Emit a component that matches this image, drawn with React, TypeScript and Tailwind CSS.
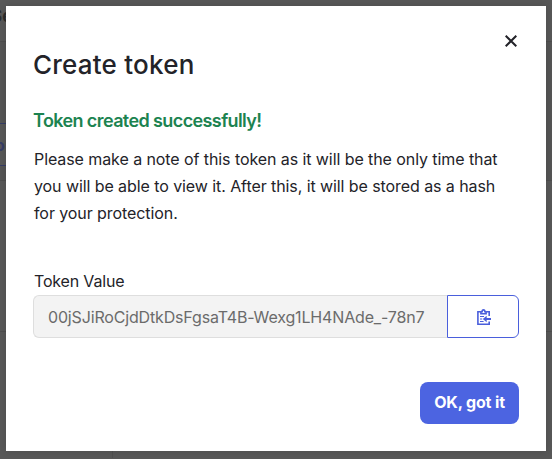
import { useState } from "react";

const TOKEN = "00jSJiRoCjdDtkDsFgsaT4B-Wexg1LH4NAde_-78n7";

function CloseIcon() {
  return (
    <svg width="12" height="12" viewBox="0 0 12 12" fill="none" stroke="#232329" strokeWidth="2">
      <path d="M0.7 0.7 11.3 11.3M11.3 0.7 0.7 11.3" />
    </svg>
  );
}

function ClipboardIcon() {
  return (
    <svg width="14" height="16" viewBox="0 0 14 16" fill="none" stroke="#4a5fdc" strokeWidth="1.6">
      <path d="M3.5 2.8H0.9V15.2H12.2V12.4M9.5 2.8H12.2V7" />
      <path d="M3.9 4.7V2.7H5.1C5.1 0.2 7.9 0.2 7.9 2.7H9.1V4.7Z" />
      <path d="M3 7.5H7M3 10H5.2M3 12.5H6.6" strokeWidth="1.2" />
      <path d="M14 10H7.5" strokeWidth="2" />
      <path d="M5.8 10 9.7 6.8V13.2Z" fill="#4a5fdc" stroke="none" />
    </svg>
  );
}

function PageBehind() {
  return (
    <div className="h-[459px] w-full overflow-hidden bg-[#585858]">
      <div className="h-[42px] border-b border-[#4e4e4e] pt-1">
        <span className="-ml-[9px] text-[17px] font-bold leading-6 text-[#2b2b2b]">Se</span>
      </div>
      <div className="flex h-[139px] items-end border-b border-[#4e4e4e] bg-[#555555] pb-[14px]">
        <div className="flex h-[43px] w-10 items-center border-y border-[#363d66] bg-[#585858]">
          <span className="-ml-[5px] text-base font-bold text-[#363d66]">o</span>
        </div>
      </div>
      <div className="h-[151px] border-b border-[#4e4e4e]" />
      <div className="ml-[112px] h-[126px] border-l border-[#505050]" />
    </div>
  );
}

function TokenField({ value }: { value: string }) {
  const [copied, setCopied] = useState(false);

  const copy = () => {
    navigator.clipboard?.writeText(value);
    setCopied(true);
  };

  return (
    <div className="mt-[41px]">
      <p className="text-base leading-[27px] tracking-[-0.17px]">Token Value</p>
      <div className="-ml-px flex h-[43px] w-[486px]">
        <div className="flex w-[414px] items-center rounded-l-md border border-r-0 border-[#dedede] bg-[#f3f3f3] pl-[14px] text-base tracking-[-0.16px] text-[#6b6b6b]">
          <span className="whitespace-nowrap">{value}</span>
        </div>
        <button
          type="button"
          aria-label={copied ? "Copied" : "Copy token"}
          onClick={copy}
          className="flex w-[72px] items-center justify-center rounded-r-md border border-[#4a5fdc] bg-white pl-[2px]"
        >
          <ClipboardIcon />
        </button>
      </div>
    </div>
  );
}

export default function App() {
  return (
    <div className="relative h-[459px] w-full overflow-hidden font-['Inter','Liberation_Sans',sans-serif] text-[#232329]">
      <PageBehind />

      <div className="absolute inset-0 px-[6px] pt-[6px] pb-[8px]">
        <div role="dialog" className="flex h-full flex-col bg-white pr-[27px] pl-7 shadow-[0_0_8px_rgba(0,0,0,0.15)]">
          <div className="flex h-[81px] justify-between">
            <h1 className="-ml-px pt-[42px] text-[26px] font-medium leading-[34px] tracking-[0.22px]">Create token</h1>
            <button type="button" aria-label="Close" className="mt-[29px] mr-[2px] h-3">
              <CloseIcon />
            </button>
          </div>

          <h2 className="-ml-px mt-[20px] text-lg font-semibold leading-[27px] tracking-[-0.6px] text-[#1c8350]">
            Token created successfully!
          </h2>
          <p className="mt-3 text-base leading-[27px] tracking-[-0.08px]">
            Please make a note of this token as it will be the only time that
            <br />
            you will be able to view it. After this, it will be stored as a hash
            <br />
            for your protection.
          </p>

          <TokenField value={TOKEN} />

          <button
            type="button"
            className="mt-11 h-[42px] w-[99px] self-end rounded-lg bg-[#4c64e1] pb-[2px] text-base font-bold tracking-[-0.15px] text-white"
          >
            OK, got it
          </button>
        </div>
      </div>
    </div>
  );
}
